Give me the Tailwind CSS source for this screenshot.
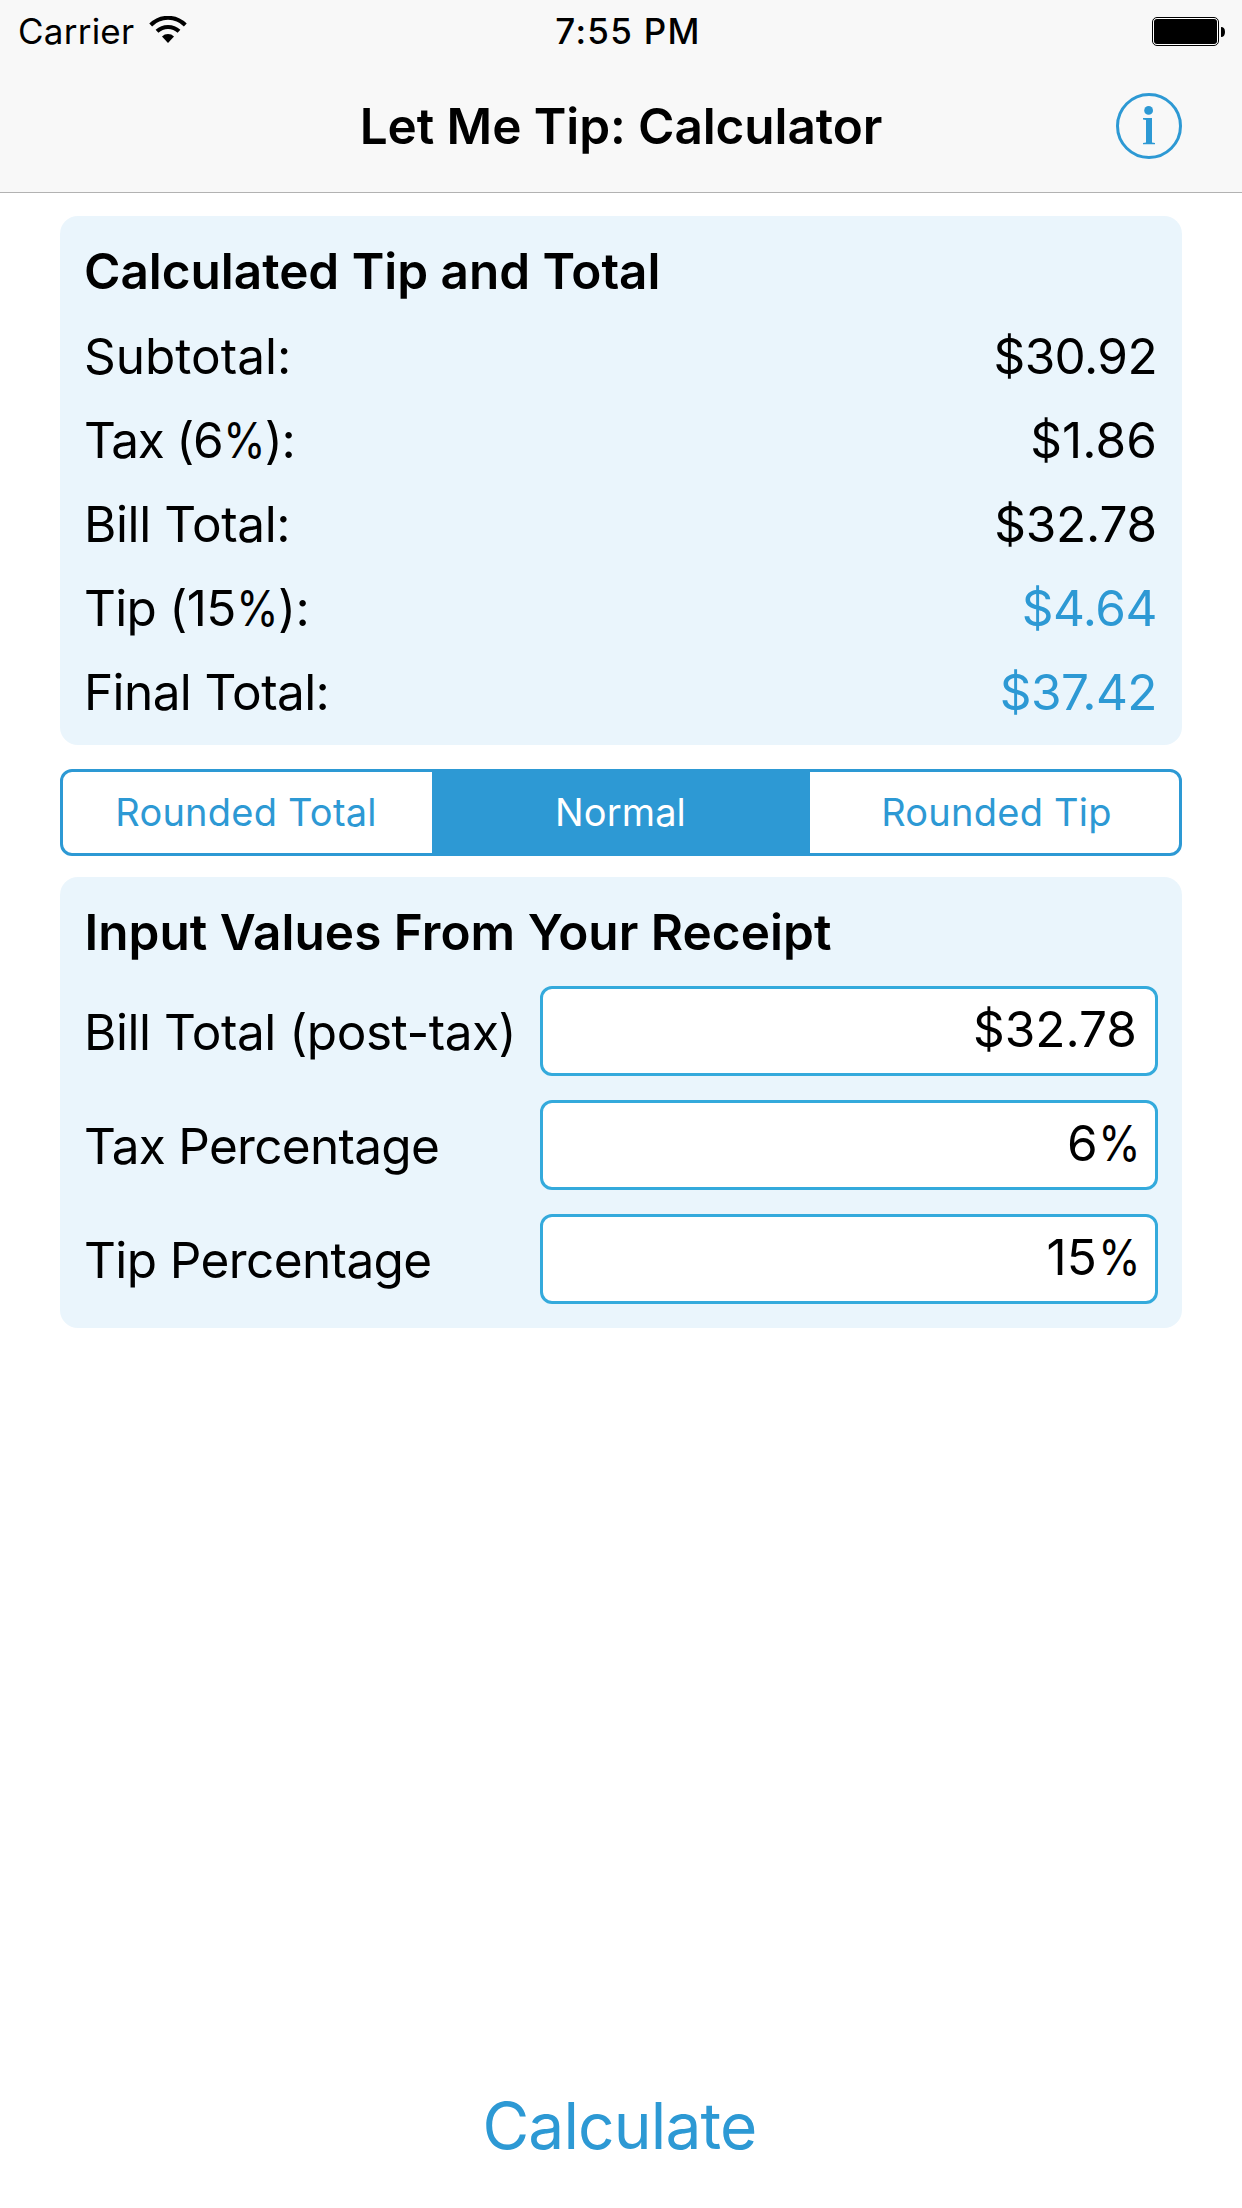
<!DOCTYPE html>
<html lang="en">
<head>
<meta charset="utf-8">
<title>Let Me Tip: Calculator</title>
<script src="https://cdn.jsdelivr.net/npm/@tailwindcss/browser@4"></script>
</head>
<body class="bg-white">
<div class="w-[1242px] h-[2208px] flex flex-col bg-white text-black font-['Inter',sans-serif] text-[49.5px] whitespace-nowrap overflow-hidden">

  <!-- Status bar and navigation bar -->
  <header class="h-[193px] shrink-0 bg-[#f8f8f8] border-b border-[#b2b2b2]">
    <div class="h-[62px] grid grid-cols-[1fr_auto_1fr] items-center text-[35px] leading-[62px]">
      <div class="flex items-center pl-[18px] h-[62px]">
        <span class="tracking-[0.24px]">Carrier</span>
        <svg class="ml-[15px] -mt-[2px]" width="38" height="28" viewBox="0 0 38 28" fill="none" stroke="#000">
          <path d="M1.7 9A24.4 24.4 0 0 1 36.3 9" stroke-width="4"/>
          <path d="M8 15.3A16 16 0 0 1 30 15.3" stroke-width="4"/>
          <path d="M19 27L13 20.5A8.5 8.5 0 0 1 25 20.5Z" fill="#000" stroke="none"/>
        </svg>
      </div>
      <span class="font-medium tracking-[1.27px] pl-[14px]">7:55 PM</span>
      <div class="flex justify-end pr-[17px]">
        <svg width="73" height="29" viewBox="0 0 73 29">
          <rect x="0.5" y="0.5" width="66" height="28" rx="4.5" fill="#fff" stroke="#000"/>
          <rect x="2" y="2" width="63" height="25" rx="3" fill="#000"/>
          <path d="M69 10Q73 10 73 15T69 20Z" fill="#000"/>
        </svg>
      </div>
    </div>
    <div class="h-[128px] grid grid-cols-[1fr_auto_1fr] items-center">
      <h1 class="col-start-2 font-semibold tracking-[-0.09px] leading-[128px]">Let Me Tip: Calculator</h1>
      <div class="flex justify-end pr-[60px]">
        <svg width="66" height="66" viewBox="0 0 66 66" fill="#2d99d4">
          <circle cx="33" cy="33" r="31.5" fill="none" stroke="#2d99d4" stroke-width="3"/>
          <circle cx="32.6" cy="17.4" r="4.4"/>
          <path d="M27 25H36V49.4L39 50V51.2H27V50L30 49.4V27L27 26.4Z"/>
        </svg>
      </div>
    </div>
  </header>

  <main class="px-[60px] pt-[23px] flex-1 flex flex-col">
    <section class="h-[529px] rounded-[18px] bg-[#eaf5fc] pt-[13px] pl-[24px] pr-[25px] leading-[84px]">
      <h2 class="font-semibold tracking-[-0.03px] mb-px">Calculated Tip and Total</h2>
      <dl>
        <div class="flex justify-between"><dt>Subtotal:</dt><dd class="tracking-[-0.6px]">$30.92</dd></div>
        <div class="flex justify-between"><dt class="tracking-[-1.2px]">Tax (6<span class="inline-block origin-right scale-x-[0.87] -ml-[5.4px]">%</span>):</dt><dd class="tracking-[0.1px]">$1.86</dd></div>
        <div class="flex justify-between"><dt class="tracking-[-0.4px]">Bill Total:</dt><dd class="tracking-[-0.2px]">$32.78</dd></div>
        <div class="flex justify-between"><dt class="tracking-[-0.7px]">Tip (15<span class="inline-block origin-right scale-x-[0.87] -ml-[5.4px]">%</span>):</dt><dd class="tracking-[-0.5px] text-[#2d99d4]">$4.64</dd></div>
        <div class="flex justify-between"><dt class="tracking-[-0.6px]">Final Total:</dt><dd class="tracking-[-0.55px] text-[#2d99d4]">$37.42</dd></div>
      </dl>
    </section>

    <!-- Rounding mode -->
    <div class="mt-[24px] h-[87px] shrink-0 flex rounded-[12px] border-[3px] border-[#2d99d4] text-[#2d99d4] text-[38px] leading-[81px] text-center">
      <div class="w-[369px] tracking-[0.23px] pr-[3px]">Rounded Total</div>
      <div class="w-[378px] bg-[#2d99d4] text-white tracking-[0.13px] pr-px">Normal</div>
      <div class="flex-1 tracking-[0.24px] pl-[4px]">Rounded Tip</div>
    </div>

    <section class="mt-[21px] h-[451px] rounded-[18px] bg-[#eaf5fc] px-[24px]">
      <h2 class="font-semibold tracking-[0.03px] pl-[0.5px] h-[109px] leading-[110px]">Input Values From Your Receipt</h2>
      <div class="flex flex-col gap-[24px]">
        <div class="flex justify-between h-[90px]">
          <span class="leading-[92px] tracking-[-0.45px]">Bill Total (post-tax)</span>
          <div class="w-[618px] rounded-[12px] border-[3px] border-[#34aadc] bg-white text-right pr-[18px] leading-[80px]">$32.78</div>
        </div>
        <div class="flex justify-between h-[90px]">
          <span class="leading-[92px] tracking-[-0.7px]">Tax Percentage</span>
          <div class="w-[618px] rounded-[12px] border-[3px] border-[#34aadc] bg-white text-right pr-[14px] leading-[80px]">6<span class="inline-block origin-right scale-x-[0.87] -ml-[5.4px]">%</span></div>
        </div>
        <div class="flex justify-between h-[90px]">
          <span class="leading-[92px] tracking-[-0.6px]">Tip Percentage</span>
          <div class="w-[618px] rounded-[12px] border-[3px] border-[#34aadc] bg-white text-right pr-[14px] leading-[80px]">15<span class="inline-block origin-right scale-x-[0.87] -ml-[4.4px]">%</span></div>
        </div>
      </div>
    </section>

    <div class="mt-auto h-[164px] text-center text-[64px] leading-[164px] tracking-[-0.84px] pr-[3px] text-[#2d99d4]">Calculate</div>
  </main>
</div>
</body>
</html>
